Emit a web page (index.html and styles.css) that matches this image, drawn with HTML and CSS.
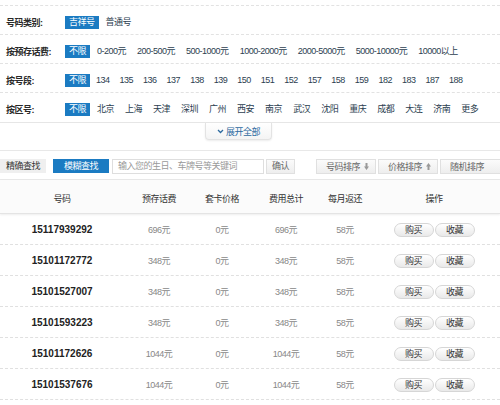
FILE: index.html
```html
<!DOCTYPE html>
<html lang="zh-CN">
<head>
<meta charset="utf-8">
<title>号码选择</title>
<link rel="stylesheet" href="styles.css">
</head>
<body>
<div class="filter">
  <div class="frow">
    <span class="flabel">号码类别:</span>
    <div class="opts"><span class="opt on">吉祥号</span><span class="opt">普通号</span></div>
  </div>
  <div class="frow">
    <span class="flabel">按预存话费:</span>
    <div class="opts"><span class="opt on">不限</span><span class="opt">0-200元</span><span class="opt">200-500元</span><span class="opt">500-1000元</span><span class="opt">1000-2000元</span><span class="opt">2000-5000元</span><span class="opt">5000-10000元</span><span class="opt">10000以上</span></div>
  </div>
  <div class="frow">
    <span class="flabel">按号段:</span>
    <div class="opts tight"><span class="opt on">不限</span><span class="opt">134</span><span class="opt">135</span><span class="opt">136</span><span class="opt">137</span><span class="opt">138</span><span class="opt">139</span><span class="opt">150</span><span class="opt">151</span><span class="opt">152</span><span class="opt">157</span><span class="opt">158</span><span class="opt">159</span><span class="opt">182</span><span class="opt">183</span><span class="opt">187</span><span class="opt">188</span></div>
  </div>
  <div class="frow">
    <span class="flabel">按区号:</span>
    <div class="opts"><span class="opt on">不限</span><span class="opt">北京</span><span class="opt">上海</span><span class="opt">天津</span><span class="opt">深圳</span><span class="opt">广州</span><span class="opt">西安</span><span class="opt">南京</span><span class="opt">武汉</span><span class="opt">沈阳</span><span class="opt">重庆</span><span class="opt">成都</span><span class="opt">大连</span><span class="opt">济南</span><span class="opt">更多</span></div>
  </div>
</div>
<div class="expand-row">
  <span class="expand"><svg class="chev" width="7" height="5" viewBox="0 0 7 5"><path d="M1 1 L3.5 3.5 L6 1" fill="none" stroke="#2d6a9f" stroke-width="1.3"/></svg>展开全部</span>
</div>
<div class="searchbar">
  <span class="stab">精确查找</span>
  <span class="stab on">模糊查找</span>
  <span class="sinput">输入您的生日、车牌号等关键词</span>
  <span class="sbtn">确认</span>
  <div class="sorts">
    <span class="sort">号码排序<svg class="arr" width="5" height="7" viewBox="0 0 5 7"><path d="M1.5 0 H3.5 V3.5 H5 L2.5 7 L0 3.5 H1.5 Z" fill="#999"/></svg></span>
    <span class="sort">价格排序<svg class="arr" width="5" height="7" viewBox="0 0 5 7"><path d="M1.5 7 H3.5 V3.5 H5 L2.5 0 L0 3.5 H1.5 Z" fill="#999"/></svg></span>
    <span class="sort">随机排序</span>
  </div>
</div>
<div class="table">
  <div class="thead">
    <span>号码</span><span>预存话费</span><span>套卡价格</span><span>费用总计</span><span>每月返还</span><span>操作</span>
  </div>
  <div class="trow">
    <span class="num">15117939292</span><span class="val">696元</span><span class="val">0元</span><span class="val">696元</span><span class="val">58元</span>
    <span class="ops"><span class="btn">购买</span><span class="btn">收藏</span></span>
  </div>
  <div class="trow">
    <span class="num">15101172772</span><span class="val">348元</span><span class="val">0元</span><span class="val">348元</span><span class="val">58元</span>
    <span class="ops"><span class="btn">购买</span><span class="btn">收藏</span></span>
  </div>
  <div class="trow">
    <span class="num">15101527007</span><span class="val">348元</span><span class="val">0元</span><span class="val">348元</span><span class="val">58元</span>
    <span class="ops"><span class="btn">购买</span><span class="btn">收藏</span></span>
  </div>
  <div class="trow">
    <span class="num">15101593223</span><span class="val">348元</span><span class="val">0元</span><span class="val">348元</span><span class="val">58元</span>
    <span class="ops"><span class="btn">购买</span><span class="btn">收藏</span></span>
  </div>
  <div class="trow">
    <span class="num">15101172626</span><span class="val">1044元</span><span class="val">0元</span><span class="val">1044元</span><span class="val">58元</span>
    <span class="ops"><span class="btn">购买</span><span class="btn">收藏</span></span>
  </div>
  <div class="trow">
    <span class="num">15101537676</span><span class="val">1044元</span><span class="val">0元</span><span class="val">1044元</span><span class="val">58元</span>
    <span class="ops"><span class="btn">购买</span><span class="btn">收藏</span></span>
  </div>
</div>
</body>
</html>
```
FILE: styles.css
```css
* { box-sizing: border-box; margin: 0; padding: 0; }
html, body { background: #fff; }
body {
  width: 500px;
  height: 405px;
  overflow: hidden;
  font-family: "Liberation Sans", "Noto Sans CJK SC", sans-serif;
  font-size: 9px;
  letter-spacing: -0.5px;
  color: #333;
}

/* filter block */
.filter {
  margin-top: 5px;
  border-top: 1px dashed #e2e2e2;
  border-bottom: 1px solid #e6e6e6;
}
.frow {
  display: flex;
  align-items: center;
  height: 29px;
  padding-top: 4px;
  border-bottom: 1px dashed #e2e2e2;
}
.frow:last-child { border-bottom: none; }
.flabel {
  flex: none;
  width: 65px;
  padding-left: 6px;
  font-weight: bold;
  color: #2a2a2a;
}
.opts { display: flex; gap: 3px; }
.opts.tight { gap: 2px; }
.opt {
  flex: none;
  padding: 0 4px;
  line-height: 13px;
  color: #2c3e50;
  white-space: nowrap;
}
.opt.on { background: #1b7bc2; color: #fff; }

/* expand tab */
.expand-row { display: flex; padding-left: 205px; }
.expand {
  display: flex;
  align-items: center;
  justify-content: center;
  gap: 2px;
  width: 67px;
  height: 17px;
  border: 1px solid #e3e3e3;
  border-top: 0;
  border-radius: 0 0 4px 4px;
  background: linear-gradient(#fff, #f4f4f4);
  box-shadow: 0 1px 2px rgba(0,0,0,.08);
  color: #2d6a9f;
}
.chev { display: block; }

/* search bar */
.searchbar {
  margin-top: 10px;
  display: flex;
  align-items: center;
  height: 30px;
  padding-top: 2px;
  border-top: 1px solid #e8e8e8;
  border-bottom: 1px solid #e8e8e8;
  white-space: nowrap;
  overflow: hidden;
}
.searchbar > * { flex: none; }
.stab {
  height: 14px;
  line-height: 14px;
  padding: 0 6px;
  background: #efefef;
  color: #333;
}
.stab.on {
  margin-left: 7px;
  padding: 0 11px;
  background: #1b7bc2;
  color: #fff;
}
.sinput {
  margin-left: 3px;
  width: 152px;
  height: 15px;
  line-height: 13px;
  padding-left: 5px;
  border: 1px solid #dedede;
  background: #fff;
  color: #999;
}
.sbtn {
  margin-left: 2px;
  height: 15px;
  line-height: 13px;
  padding: 0 5px;
  border: 1px solid #e0e0e0;
  background: linear-gradient(#fbfbfb, #eeeeee);
  color: #666;
}
.sorts { display: flex; gap: 2px; margin-left: 21px; }
.sort {
  flex: none;
  display: flex;
  align-items: center;
  gap: 4px;
  height: 15px;
  padding: 0 6px 0 9px;
  border: 1px solid #e0e0e0;
  background: linear-gradient(#fbfbfb, #eeeeee);
  color: #666;
}
.sort:last-child { padding-right: 40px; }
.arr { display: block; }

/* table */
.thead, .trow {
  display: grid;
  grid-template-columns: 124px 70px 56px 72px 46px 132px;
  align-items: center;
  text-align: center;
}
.thead {
  height: 34px;
  padding-top: 3px;
  background: #fbfbfb;
  border-bottom: 1px solid #e4e4e4;
  box-shadow: 0 1px 2px rgba(0,0,0,.07);
  color: #333;
}
.trow {
  height: 31px;
  padding-top: 1px;
  border-bottom: 1px dashed #e0e0e0;
}
.num {
  font-size: 10px;
  font-weight: bold;
  letter-spacing: 0;
  color: #222;
}
.val { color: #888; }
.ops { display: flex; justify-content: center; gap: 1px; }
.btn {
  width: 40px;
  height: 14px;
  line-height: 12px;
  border: 1px solid #d6d6d6;
  border-radius: 7px;
  background: linear-gradient(#ffffff, #e9e9e9);
  color: #333;
}
```
